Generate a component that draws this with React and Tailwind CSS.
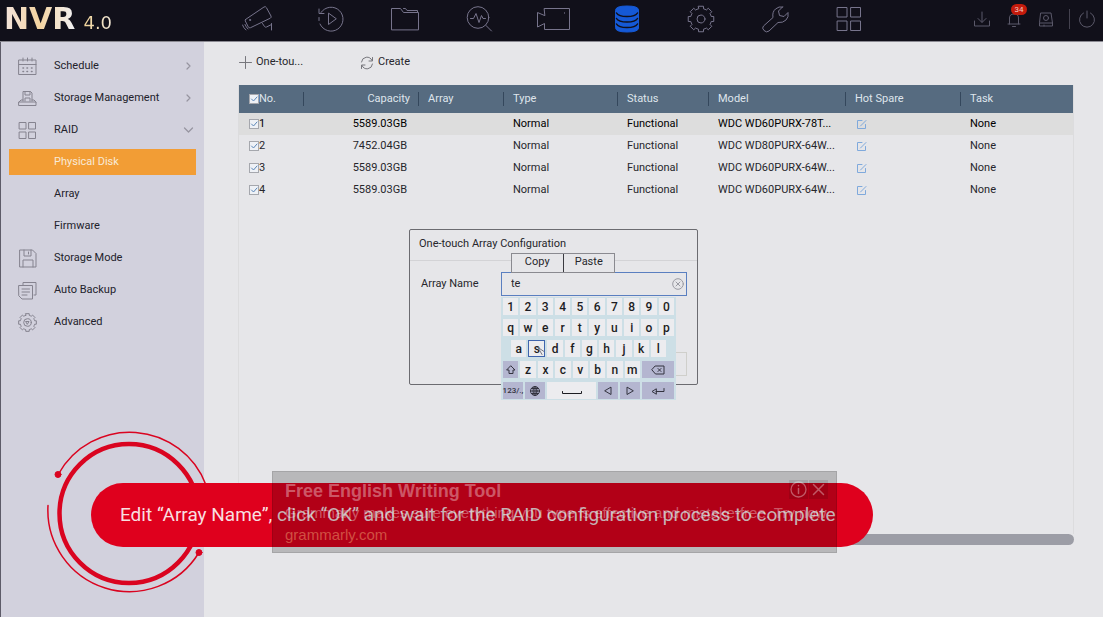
import React from 'react';

const iconProps = { fill: 'none', stroke: 'currentColor', strokeLinejoin: 'round', strokeLinecap: 'round' };

// Outline of an eight-toothed gear centred on (c, c)
const gearPath = (c, outer, inner) => {
    const point = (r, deg) => {
        const a = (deg * Math.PI) / 180;
        return `${(c + r * Math.sin(a)).toFixed(2)} ${(c - r * Math.cos(a)).toFixed(2)}`;
    };
    let d = '';
    for (let i = 0; i < 8; i++) {
        const t = i * 45;
        d += `${i ? 'L' : 'M'}${point(outer, t - 11)}L${point(outer, t + 11)}L${point(inner, t + 14)}A${inner} ${inner} 0 0 1 ${point(inner, t + 31)}`;
    }
    return `${d}z`;
};

const navItems = [
    {
        name: 'Live View',
        icon: (
            <>
                <path d="M3.500 15.500 22 3q1.500-1 2.500.8L29 12q.6 1.400-.7 2.200L8.500 23.700q-1.500.6-2.200-.8L3.300 17q-.4-1 .2-1.500z" />
                <path d="m20.500 19.500 2 3q.8 1 2 .5l5-2.500M29.500 19.500v6.500" />
                <path d="M.5 21q1 3 3.500 5M3 20.500q1 2.500 3 4.500" />
                <circle cx="8" cy="16" r=".6" />
            </>
        ),
    },
    {
        name: 'Playback',
        icon: (
            <>
                <path d="M5 8.500A12 12 0 1 1 4 20" />
                <path d="M3 5v4.500h5M3 13.500v3M12.500 9.500v11l7.500-5.500z" />
            </>
        ),
    },
    {
        name: 'File Management',
        icon: <path d="M1.500 25.500V4.500h9l3 4h15v17zM13.500 4.500h2l1.500 2h10.500v2" />,
    },
    {
        name: 'Smart Analysis',
        icon: (
            <>
                <circle cx="14" cy="13.500" r="10.800" />
                <path d="m22 21.500 5.500 5.500M6.500 14.500h3l2.500-5 3 9 2.500-7 1.500 3h2.500" />
            </>
        ),
    },
    {
        name: 'Camera',
        wide: true,
        icon: <path d="M8.500 4.500h25v21h-25v-6l-7 3.500V8.500l7 3zM28.500 8.800v.4" />,
    },
    {
        name: 'Storage',
        active: true,
        icon: (
            <>
                <path d="M3.500 6q0-4 11.500-4T26.500 6v18q0 4-11.500 4T3.500 24z" fill="currentColor" />
                <path d="M4.500 9q2 3.500 10.500 3.500T25.500 9M4.500 14.500q2 3.500 10.500 3.500t10.500-3.500M4.500 20q2 3.500 10.500 3.500T25.500 20" stroke="#11101a" strokeWidth="1.500" />
            </>
        ),
    },
    {
        name: 'System',
        icon: (
            <>
                <path d={gearPath(15, 13, 10.5)} />
                <circle cx="15" cy="15" r="4" />
            </>
        ),
    },
    {
        name: 'Maintenance',
        icon: <path d="m22.500 3-4 4 1 4.500 4.500 1 4-4q1 4.500-2 7.500t-8 2.500L9 27q-2.500 2-5-.5T3.500 22L13 13.500Q12 8 15.500 5t7-2z" />,
    },
    {
        name: 'Applications',
        icon: <path d="M3.500 3.500h9.500v9.500H3.500zM17 3.500h9.500v9.500H17zM3.500 17h9.500v9.500H3.500zM17 17h9.500v9.500H17z" />,
    },
];

const GRID_ICON = <path d="M1.500 1.500h6.500v6.500H1.500zM11 1.500h6.500v6.500H11zM1.500 11h6.500v6.500H1.500zM11 11h6.500v6.500H11z" />;

const menu = [
    {
        label: 'Schedule',
        arrow: 'right',
        icon: (
            <>
                <path d="M1 3h17v14.500H1zM1 7.500h17M5 1v3M9.500 1v3M14 1v3" />
                <path d="M5 11h.5M9 11h.5M13.500 11h.5M5 14.500h.5M9 14.500h.5M13.500 14.500h.5" strokeWidth="1.600" />
            </>
        ),
    },
    {
        label: 'Storage Management',
        arrow: 'right',
        icon: <path d="M5 12V2.500h7.500L14 4v8M7 2.500V6h5V2.500M7 12V9h5v3M1 13h17v3.500H1zM1 13l2-2h2M18 13l-2-2h-2" />,
    },
    { label: 'RAID', arrow: 'down', icon: GRID_ICON },
    { label: 'Physical Disk', active: true },
    { label: 'Array' },
    { label: 'Firmware' },
    {
        label: 'Storage Mode',
        icon: <path d="M2 1h12.500L18 4.500v13.500H2zM6 1v6h7V1M10.500 3v2M5 18v-7h10v7" />,
    },
    {
        label: 'Auto Backup',
        icon: <path d="M1 4.500h13.500V18H4l-3-3zM5 4V1.500h13V14h-2M4 8h7.500M4 11h7.500M4 14h5" />,
    },
    {
        label: 'Advanced',
        icon: (
            <>
                <path d={gearPath(9.5, 9, 7.3)} />
                <circle cx="9.500" cy="9.500" r="3.800" />
                <path d="M8 8.500h3L9.500 11z" />
            </>
        ),
    },
];

const disks = [
    { no: 1, capacity: '5589.03GB', model: 'WDC WD60PURX-78T...' },
    { no: 2, capacity: '7452.04GB', model: 'WDC WD80PURX-64W...' },
    { no: 3, capacity: '5589.03GB', model: 'WDC WD60PURX-64W...' },
    { no: 4, capacity: '5589.03GB', model: 'WDC WD60PURX-64W...' },
];

const columns = ['Array', 'Type', 'Status', 'Model', 'Hot Spare', 'Task'];

const TopBar = () => (
    <header className="flex h-[42px] shrink-0 items-center border-b border-[#8b8a92] bg-[#11101a]">
        <div className="flex w-[220px] shrink-0 items-baseline gap-2 pb-1 pl-1 font-['DejaVu_Sans',sans-serif] leading-9">
            <span className="bg-linear-to-r from-[#f3e4dd] via-[#f3d3a0] to-[#f1f1f5] bg-clip-text text-[30px] font-bold text-transparent">NVR</span>
            <span className="bg-linear-to-r from-[#f0d296] to-[#f3e9d8] bg-clip-text text-lg text-transparent">4.0</span>
        </div>
        <nav className="flex" aria-label="Main">
            {navItems.map((item) => (
                <button
                    key={item.name}
                    aria-label={item.name}
                    className={`flex w-[74px] items-center justify-center pb-1 ${item.active ? 'text-[#1559d6]' : 'text-[#77748c]'}`}
                >
                    <svg className={item.wide ? 'h-[30px] w-[34px]' : 'size-[30px]'} viewBox={item.wide ? '0 0 34 30' : '0 0 30 30'} {...iconProps}>
                        {item.icon}
                    </svg>
                </button>
            ))}
        </nav>
        <div className="ml-auto flex items-center gap-[14px] pr-[7px] pb-[3px] text-[#5b596a]">
            <button aria-label="Download">
                <svg className="size-[18px]" viewBox="0 0 18 18" {...iconProps}>
                    <path d="M1.500 11v5h15v-5M9 2v10M5 8.500l4 4 4-4" />
                </svg>
            </button>
            <button aria-label="Alarms" className="relative">
                <svg className="size-[18px]" viewBox="0 0 18 18" {...iconProps}>
                    <path d="M3 14h12M4.500 14V8q0-4 4.500-4t4.500 4v6M7.500 16.500h3M9 2.500V4" />
                </svg>
                <span className="absolute -top-[6px] left-1.5 flex h-[11px] w-4 items-center justify-center rounded-full bg-[#c41b0c] text-[8px] text-[#f0c8c0]">34</span>
            </button>
            <button aria-label="Device">
                <svg className="size-[18px]" viewBox="0 0 18 18" {...iconProps}>
                    <path d="M4 3h10l1.500 10v3h-13v-3zM2.500 13h13M7 16v-1" />
                    <circle cx="9" cy="8" r="2.500" />
                </svg>
            </button>
            <div className="flex items-center gap-2">
                <span className="h-5 w-px bg-[#44424f]" />
                <button aria-label="Power">
                    <svg className="size-[18px]" viewBox="0 0 18 18" {...iconProps}>
                        <path d="M9 1v7M5.500 3a7.500 7.500 0 1 0 7 0" />
                    </svg>
                </button>
            </div>
        </div>
    </header>
);

const Sidebar = () => (
    <aside className="w-[204px] shrink-0 border-l border-[#5d5b68] bg-[#d2d1dd] pt-[11px] pr-2 pl-2">
        <nav className="flex flex-col gap-1.5" aria-label="Storage">
            {menu.map((item) => (
                <a
                    key={item.label}
                    href="#"
                    className={`flex h-[26px] items-center pr-0.5 pl-[9px] ${item.active ? 'bg-[#f29d35] text-[#f8ead8]' : 'text-[#22222b]'}`}
                >
                    <span className="w-9 text-[#85838f]">
                        {item.icon && (
                            <svg className="size-[19px]" viewBox="0 0 19 19" {...iconProps}>
                                {item.icon}
                            </svg>
                        )}
                    </span>
                    {item.label}
                    {item.arrow && (
                        <svg className="ml-auto h-2.5 w-3 text-[#96949f]" viewBox="0 0 12 10" {...iconProps}>
                            <path d={item.arrow === 'right' ? 'm5 2 3 3-3 3' : 'm2.500 3 4 4 4-4'} strokeWidth="1.200" />
                        </svg>
                    )}
                </a>
            ))}
        </nav>
    </aside>
);

const Check = ({ label }) => (
    <span className="relative inline-flex size-2.5">
        <input type="checkbox" defaultChecked aria-label={label} className="size-2.5 appearance-none border border-[#a5a7ad] bg-[#eef1f6]" />
        <svg className="pointer-events-none absolute inset-0 size-2.5 text-[#5b87b8]" viewBox="0 0 10 10" {...iconProps}>
            <path d="m2.500 5 2 2 3.500-4" />
        </svg>
    </span>
);

const DiskTable = () => (
    <table className="w-full table-fixed border-collapse text-left text-[#26262c]">
        <colgroup>
            <col className="w-[65px]" />
            <col className="w-[115px]" />
            <col className="w-[85px]" />
            <col className="w-[114px]" />
            <col className="w-[91px]" />
            <col className="w-[137px]" />
            <col className="w-[115px]" />
            <col />
        </colgroup>
        <thead className="bg-[#566b80] text-[#dfe5ec]">
            <tr className="h-7">
                <th className="p-0 font-normal">
                    <div className="flex h-3.5 items-center border-r border-[#34475c] pl-2.5">
                        <Check label="Select all" />
                        No.
                    </div>
                </th>
                <th className="p-0 font-normal">
                    <div className="flex h-3.5 items-center justify-end border-r border-[#34475c] pr-2">Capacity</div>
                </th>
                {columns.map((name) => (
                    <th key={name} className="p-0 font-normal">
                        <div className={`flex h-3.5 items-center pl-[9px] ${name === 'Task' ? '' : 'border-r border-[#34475c]'}`}>{name}</div>
                    </th>
                ))}
            </tr>
        </thead>
        <tbody>
            {disks.map((disk) => (
                <tr key={disk.no} className="h-[22px] first:bg-[#dddddd] first:text-black">
                    <td className="p-0 pl-2.5">
                        <div className="flex items-center">
                            <Check label={`Disk ${disk.no}`} />
                            {disk.no}
                        </div>
                    </td>
                    <td className="p-0 pr-3 text-right">{disk.capacity}</td>
                    <td />
                    <td className="p-0 pl-[9px]">Normal</td>
                    <td className="p-0 pl-[9px]">Functional</td>
                    <td className="p-0 pl-[9px] whitespace-nowrap">{disk.model}</td>
                    <td className="p-0 pl-[11px]">
                        <button aria-label={`Edit hot spare ${disk.no}`} className="flex text-[#7fa9dc]">
                            <svg className="size-2.5" viewBox="0 0 10 10" {...iconProps}>
                                <path d="M5 1.500H.5v8H8.500V5.500M3.500 7 9 1.500" />
                            </svg>
                        </button>
                    </td>
                    <td className="p-0 pl-[9px]">None</td>
                </tr>
            ))}
        </tbody>
    </table>
);

const Key = ({ children, label, dark, selected, size = 'flex-1' }) => (
    <button
        aria-label={label}
        className={`flex h-[17px] min-w-0 items-center justify-center ${size} ${dark ? 'bg-[#b4b6d0] text-[#33333f]' : 'bg-[#ececef] text-[#1c1c22]'} ${selected ? 'border border-[#3f64ad]' : ''}`}
    >
        {children}
    </button>
);

const KeyIcon = ({ d }) => (
    <svg className="h-2.5 w-3.5" viewBox="0 0 14 10" {...iconProps}>
        <path d={d} />
    </svg>
);

const Keyboard = () => (
    <div className="absolute top-[67px] left-[91px] flex w-[175px] flex-col gap-1 bg-[#cddfe6] px-0.5 py-px text-[12px] leading-none font-medium">
        {['1234567890', 'qwertyuiop'].map((row) => (
            <div key={row} className="flex gap-0.5">
                {row.split('').map((k) => <Key key={k}>{k}</Key>)}
            </div>
        ))}
        <div className="flex gap-0.5 px-2">
            {'asdfghjkl'.split('').map((k) => <Key key={k} selected={k === 's'}>{k}</Key>)}
        </div>
        <div className="flex gap-0.5">
            <Key dark label="Shift"><KeyIcon d="m7 1 4 4H9v3.500H5V5H3z" /></Key>
            {'zxcvbnm'.split('').map((k) => <Key key={k}>{k}</Key>)}
            <Key dark label="Backspace" size="w-8"><KeyIcon d="M4.500 1H13v8H4.500L1 5zM7 3.500l3 3M10 3.500l-3 3" /></Key>
        </div>
        <div className="flex gap-0.5">
            <Key dark size="w-5"><span className="text-[8px]">123/.,</span></Key>
            <Key dark label="Language" size="w-5">
                <svg className="size-3" viewBox="0 0 12 12" {...iconProps}>
                    <circle cx="6" cy="6" r="4.500" />
                    <ellipse cx="6" cy="6" rx="2" ry="4.500" />
                    <path d="M1.500 6h9M2.500 3.500h7M2.500 8.500h7M6 1.500v9" />
                </svg>
            </Key>
            <Key label="Space">
                <svg className="h-2 w-5" viewBox="0 0 20 8" {...iconProps}>
                    <path d="M.5 4.500v2h19v-2" />
                </svg>
            </Key>
            <Key dark label="Cursor left" size="w-5"><KeyIcon d="M10 1.500v7L4 5z" /></Key>
            <Key dark label="Cursor right" size="w-5"><KeyIcon d="M4 1.500v7L10 5z" /></Key>
            <Key dark label="Enter" size="w-8"><KeyIcon d="M5 3 1 5.500 5 8zM5 5.500h8v-3" /></Key>
        </div>
        {/* Pointer over the pressed key */}
        <svg className="pointer-events-none absolute top-[50px] left-[36px] size-2 text-[#777782]" viewBox="0 0 8 8" {...iconProps}>
            <path d="M1 .5 5 7.500M1 .5l6 4" />
        </svg>
    </div>
);

const ArrayDialog = () => (
    <section
        role="dialog"
        aria-label="One-touch Array Configuration"
        className="absolute top-[229px] left-[409px] w-[289px] rounded-xs border border-[#6b6b70] bg-[#e6e6e9] text-[#26262c]"
    >
        <h2 className="border-b border-[#d3d3d6] pb-0.5 pl-[9px] leading-7">One-touch Array Configuration</h2>
        <div className="flex items-center pt-[11px] pr-2.5 pl-[11px]">
            <label htmlFor="array-name" className="w-20 shrink-0">Array Name</label>
            <div className="flex h-6 min-w-0 flex-1 items-center border border-[#5a7fc0] pr-0.5 pl-[9px]">
                <input id="array-name" defaultValue="te" className="min-w-0 flex-1 bg-transparent outline-none" />
                <button aria-label="Clear">
                    <svg className="block size-3 text-[#9a9aa2]" viewBox="0 0 12 12" {...iconProps}>
                        <circle cx="6" cy="6" r="5.300" />
                        <path d="m4 4 4 4M8 4 4 8" />
                    </svg>
                </button>
            </div>
        </div>
        <div className="flex justify-end pt-14 pr-2.5 pb-2">
            <button aria-label="Cancel" className="h-6 w-16 border border-[#cfcfcb]" />
        </div>
        <div className="absolute top-[23px] left-[101px] flex h-5 w-[104px] items-center border border-[#8a8a90] bg-[#e6e6e9]">
            <button className="h-full flex-1 border-r border-[#3a3a40] pb-1 leading-none">Copy</button>
            <button className="h-full flex-1 pb-1 leading-none">Paste</button>
        </div>
        <Keyboard />
    </section>
);

const Caption = () => (
    <div className="absolute top-[425px] left-[40px]">
        <svg className="h-44 w-44 text-[#da0420]" viewBox="0 0 176 176" {...iconProps} aria-hidden="true">
            <circle cx="89" cy="88.500" r="69.500" strokeWidth="4.500" />
            <path d="M18.500 49A81.500 81.500 0 0 1 166 60M8 80.500A81.500 81.500 0 0 0 159 127.500" strokeWidth="1.500" />
            <circle cx="18" cy="49.500" r="3" fill="currentColor" />
            <circle cx="159" cy="127.500" r="3" fill="currentColor" />
        </svg>
        <p className="absolute top-[58px] left-[51px] flex h-16 w-[782px] items-center rounded-full bg-[#df001d] pl-[29px] text-[19px] whitespace-nowrap text-[#f8dfe0]">
            Edit “Array Name”, click “OK” and wait for the RAID configuration process to complete
        </p>
    </div>
);

const AdOverlay = () => (
    <div className="absolute top-[471px] left-[272px] h-[82px] w-[565px] border border-black/10 bg-black/20 pt-[7px] pl-3 font-['Liberation_Sans',Arial,sans-serif] whitespace-nowrap text-white/35">
        <h3 className="text-[18px] leading-6 font-bold">Free English Writing Tool</h3>
        <p className="text-[15px] leading-5">Grammarly makes sure everything you type is effective and mistake-free. Try now</p>
        <a href="#" className="block text-[15px] leading-6 text-[#f0a070]/50">grammarly.com</a>
        <div className="absolute top-2 right-2 flex gap-px">
            <button aria-label="Ad info" className="bg-black/10">
                <svg className="block size-[19px]" viewBox="0 0 19 19" {...iconProps}>
                    <circle cx="9.500" cy="9.500" r="7.500" strokeWidth="1.300" />
                    <path d="M9.500 8.500v5M9.500 5.500v.3" strokeWidth="1.500" />
                </svg>
            </button>
            <button aria-label="Close ad" className="bg-black/10">
                <svg className="block size-[19px]" viewBox="0 0 19 19" {...iconProps}>
                    <path d="m4.500 4.500 10 10M14.500 4.500l-10 10" strokeWidth="1.500" />
                </svg>
            </button>
        </div>
    </div>
);

export default function App() {
    return (
        <div className="relative flex min-h-screen flex-col overflow-hidden bg-[#e6e6e9] font-['Roboto','Liberation_Sans',sans-serif] text-[11px]">
            <TopBar />
            <div className="flex flex-1">
                <Sidebar />
                <main className="flex min-w-0 flex-1 flex-col pr-[29px] pb-[72px] pl-[34px] text-[#26262c]">
                    <div className="flex h-[43px] items-center pb-0.5 pl-px">
                        <button className="flex w-[121px] items-center gap-1">
                            <svg className="size-[13px] text-[#77777d]" viewBox="0 0 13 13" {...iconProps}>
                                <path d="M6.500 .5v12M.5 6.500h12" />
                            </svg>
                            One-tou...
                        </button>
                        <button className="flex items-center gap-1">
                            <svg className="size-3.5 text-[#77777d]" viewBox="0 0 14 14" {...iconProps}>
                                <path d="M1.500 6A5.500 5.500 0 0 1 12 4.500M12.500 1.500v3.500H9M12.500 8A5.500 5.500 0 0 1 2 9.500M1.500 12.500V9H5" />
                            </svg>
                            Create
                        </button>
                    </div>
                    <div className="flex-1 border-x border-[#dcdcde]">
                        <DiskTable />
                    </div>
                    <div className="h-[11px] rounded-full bg-[#9c9da6]" />
                </main>
            </div>
            <ArrayDialog />
            <Caption />
            <AdOverlay />
        </div>
    );
}
